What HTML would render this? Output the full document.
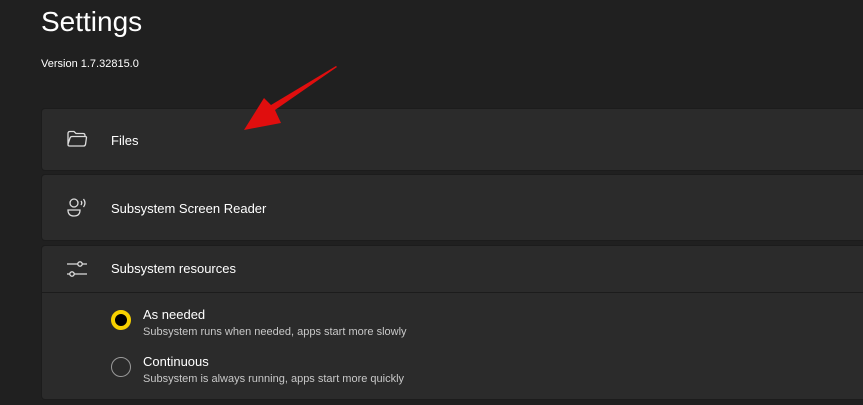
<!DOCTYPE html>
<html><head><style>
body{margin:0;width:863px;height:405px;background:#202020;overflow:hidden;font-family:"Segoe UI","Liberation Sans",sans-serif;color:#fff;position:relative}
.t{position:absolute;left:41px;top:6px;font-size:28px;font-weight:500}
.v{position:absolute;left:41px;top:58px;font-size:11px}
.card{position:absolute;left:41px;right:-5px;background:#2b2b2b;border:1px solid #1c1c1c;border-radius:4px}
.lbl{position:absolute;left:69px;font-size:13px}
.ic{position:absolute;left:24px}
.sub{position:absolute;left:101px;font-size:11px;color:#c8c8c8}
.opt{position:absolute;left:101px;font-size:13px}
</style></head><body>
<div class="t">Settings</div>
<div class="v">Version 1.7.32815.0</div>
<div class="card" style="top:108px;height:61px">
<svg class="ic" style="top:21px" width="22" height="18" viewBox="0 0 22 18"><path d="M2 3.5q0-2 2-2h4l2 2h7q2 0 2 2v1M2 3.5v11q0 1.5 1.5 1.5h14q1.5 0 2-1.5l1-7q0-1-1.5-1H6q-1.5 0-2 1.5L2 14" fill="none" stroke="#ddd" stroke-width="1.3"/></svg>
<div class="lbl" style="top:24px">Files</div></div>
<div class="card" style="top:174px;height:65px">
<svg class="ic" style="top:22px" width="22" height="22" viewBox="0 0 22 22"><circle cx="8" cy="6" r="4" fill="none" stroke="#ddd" stroke-width="1.3"/><path d="M2 13h12q0 6-6 6t-6-6z" fill="none" stroke="#ddd" stroke-width="1.3"/><path d="M15 4q1.5 2 0 4M17.5 2q3 4 0 8" fill="none" stroke="#ddd" stroke-width="1.3"/></svg>
<div class="lbl" style="top:26px">Subsystem Screen Reader</div></div>
<div class="card" style="top:245px;height:153px">
<svg class="ic" style="top:13px" width="22" height="20" viewBox="0 0 22 20"><path d="M1 5h11M16 5h5M1 15h3M8 15h13" stroke="#ddd" stroke-width="1.3"/><circle cx="14" cy="5" r="2.2" fill="none" stroke="#ddd" stroke-width="1.3"/><circle cx="6" cy="15" r="2.2" fill="none" stroke="#ddd" stroke-width="1.3"/></svg>
<div class="lbl" style="top:15px">Subsystem resources</div>
<div style="position:absolute;left:0;right:0;top:46px;height:1px;background:#1c1c1c"></div>
<div style="position:absolute;left:69px;top:64px;width:12px;height:12px;border:4px solid #f7d100;border-radius:50%;background:#000"></div>
<div class="opt" style="top:61px">As needed</div>
<div class="sub" style="top:80px">Subsystem runs when needed, apps start more slowly</div>
<div style="position:absolute;left:69px;top:111px;width:18px;height:18px;border:1px solid #9a9a9a;border-radius:50%"></div>
<div class="opt" style="top:108px">Continuous</div>
<div class="sub" style="top:127px">Subsystem is always running, apps start more quickly</div>
</div>
<svg style="position:absolute;left:0;top:0" width="863" height="405"><path d="M337 67L275 110L281 123L244 130L264 98L271 105L336 66Z" fill="#e00e0e"/></svg>
</body></html>
